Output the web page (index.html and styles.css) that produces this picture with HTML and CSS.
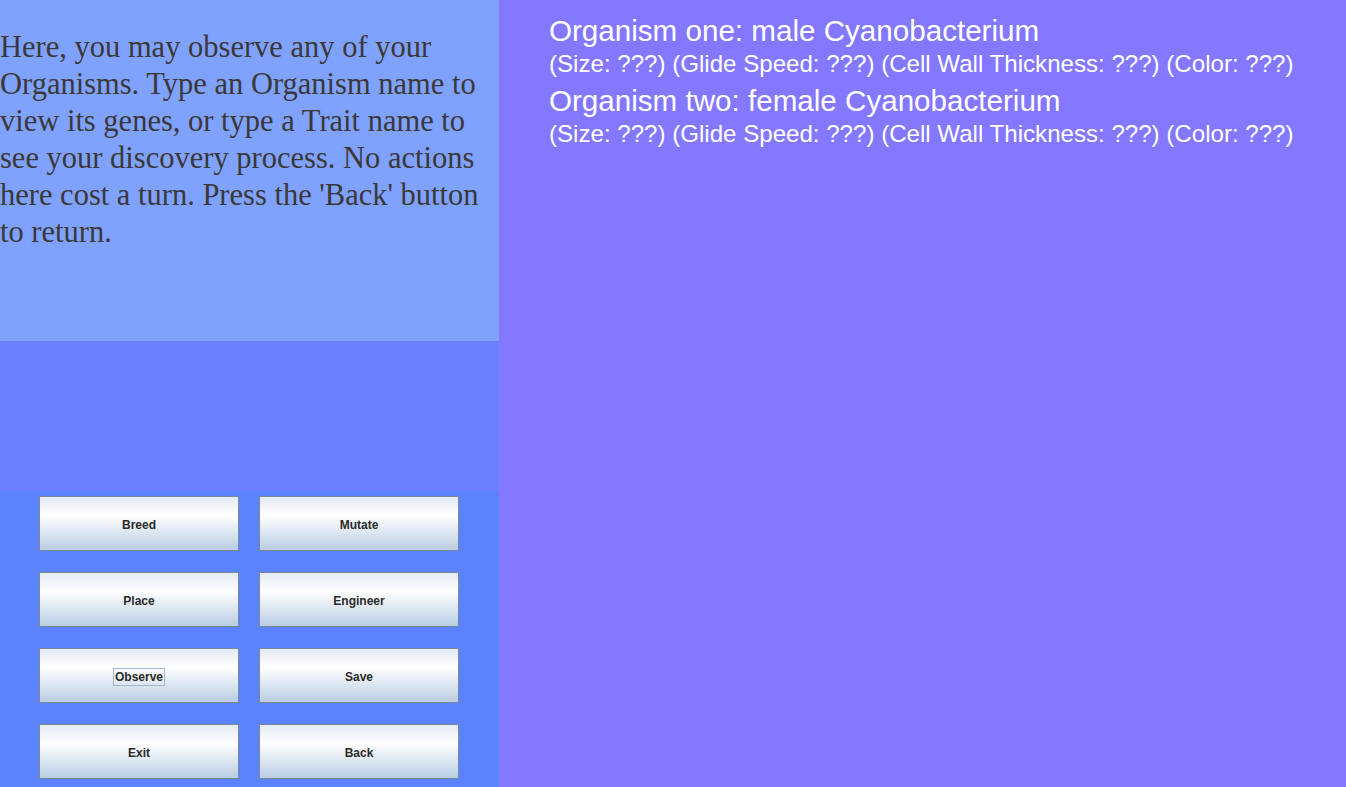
FILE: index.html
```html
<!DOCTYPE html>
<html>
<head>
<meta charset="utf-8">
<link rel="stylesheet" href="styles.css">
</head>
<body>
<div class="app">
  <div class="left">
    <div class="info">
      <p class="info-text">Here, you may observe any of your Organisms. Type an Organism name to view its genes, or type a Trait name to see your discovery process. No actions here cost a turn. Press the 'Back' button to return.</p>
    </div>
    <div class="middle"></div>
    <div class="buttons">
      <button class="btn">Breed</button>
      <button class="btn">Mutate</button>
      <button class="btn">Place</button>
      <button class="btn">Engineer</button>
      <button class="btn"><span class="focus">Observe</span></button>
      <button class="btn">Save</button>
      <button class="btn">Exit</button>
      <button class="btn">Back</button>
    </div>
  </div>
  <div class="right">
    <div class="organism">
      <div class="org-title">Organism one: male Cyanobacterium</div>
      <div class="org-traits">(Size: ???) (Glide Speed: ???) (Cell Wall Thickness: ???) (Color: ???)</div>
    </div>
    <div class="organism">
      <div class="org-title">Organism two: female Cyanobacterium</div>
      <div class="org-traits">(Size: ???) (Glide Speed: ???) (Cell Wall Thickness: ???) (Color: ???)</div>
    </div>
  </div>
</div>
</body>
</html>
```
FILE: styles.css
```css
html, body {
  margin: 0;
  padding: 0;
  width: 1346px;
  height: 787px;
  overflow: hidden;
}
.app {
  display: flex;
  width: 1346px;
  height: 787px;
}
.left {
  width: 499px;
  display: flex;
  flex-direction: column;
}
.info {
  height: 341px;
  background: #80a2ff;
  box-sizing: border-box;
  padding-top: 29px;
}
.info-text {
  margin: 0;
  font-family: "Liberation Serif", "DejaVu Serif", serif;
  font-size: 30.5px;
  line-height: 37px;
  color: #3b3838;
  width: 499px;
}
.middle {
  height: 150px;
  background: #6a80ff;
}
.buttons {
  flex: 1;
  background: #5b83ff;
  display: grid;
  grid-template-columns: 200px 200px;
  grid-auto-rows: 55px;
  column-gap: 20px;
  row-gap: 21px;
  padding: 5px 0 0 39px;
}
.btn {
  box-sizing: border-box;
  width: 200px;
  height: 55px;
  border: 1px solid #7a8a9a;
  background: linear-gradient(to bottom, #e3eaf4 0%, #ffffff 35%, #d9e4f0 70%, #b9cde3 100%);
  font-family: "Liberation Sans", Arial, sans-serif;
  font-weight: bold;
  font-size: 12px;
  color: #2a2a2a;
  padding: 2px 0 0 0;
  display: flex;
  align-items: center;
  justify-content: center;
}
.focus {
  border: 1px solid #a3b8cf;
  padding: 1px 1px;
}
.right {
  flex: 1;
  background: #8378ff;
  padding: 14px 0 0 50px;
  color: #ffffff;
  font-family: "Liberation Sans", Arial, sans-serif;
}
.organism {
  margin-bottom: 4px;
}
.org-title {
  font-size: 29.6px;
  line-height: 34px;
}
.org-traits {
  font-size: 24.1px;
  line-height: 32px;
}
```
